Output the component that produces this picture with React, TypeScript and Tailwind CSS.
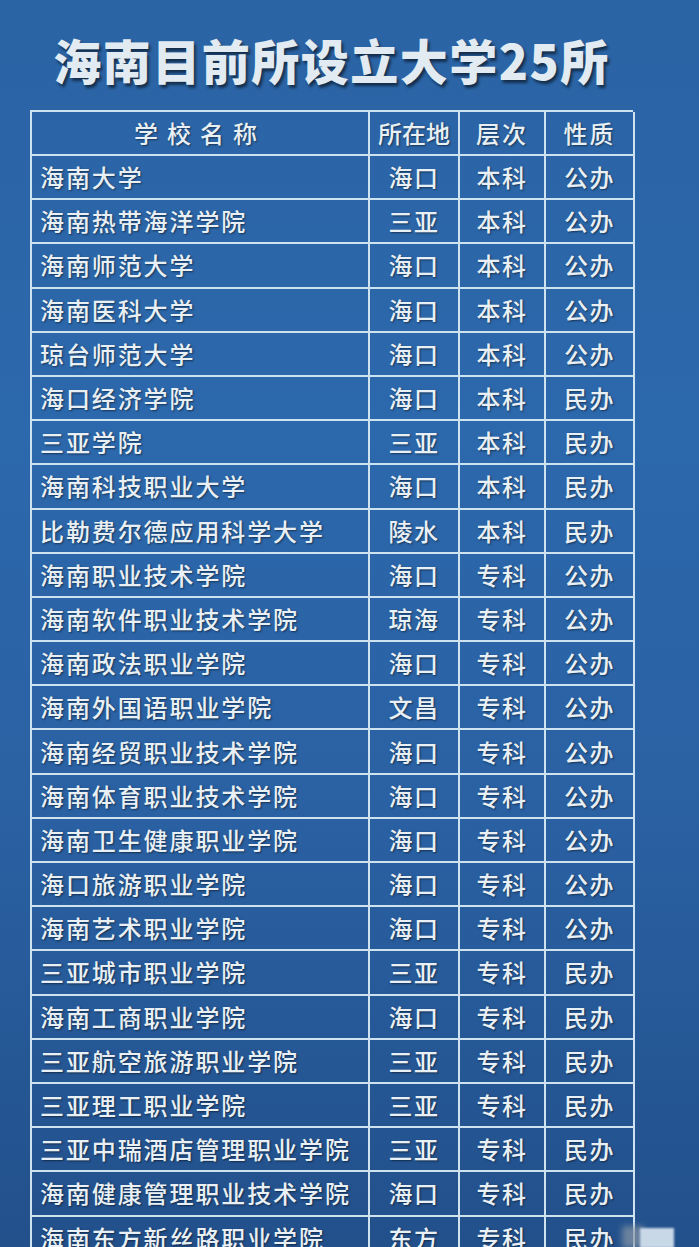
import React from "react";

const rows: [string, string, string, string][] = [
  ["海南大学", "海口", "本科", "公办"],
  ["海南热带海洋学院", "三亚", "本科", "公办"],
  ["海南师范大学", "海口", "本科", "公办"],
  ["海南医科大学", "海口", "本科", "公办"],
  ["琼台师范大学", "海口", "本科", "公办"],
  ["海口经济学院", "海口", "本科", "民办"],
  ["三亚学院", "三亚", "本科", "民办"],
  ["海南科技职业大学", "海口", "本科", "民办"],
  ["比勒费尔德应用科学大学", "陵水", "本科", "民办"],
  ["海南职业技术学院", "海口", "专科", "公办"],
  ["海南软件职业技术学院", "琼海", "专科", "公办"],
  ["海南政法职业学院", "海口", "专科", "公办"],
  ["海南外国语职业学院", "文昌", "专科", "公办"],
  ["海南经贸职业技术学院", "海口", "专科", "公办"],
  ["海南体育职业技术学院", "海口", "专科", "公办"],
  ["海南卫生健康职业学院", "海口", "专科", "公办"],
  ["海口旅游职业学院", "海口", "专科", "公办"],
  ["海南艺术职业学院", "海口", "专科", "公办"],
  ["三亚城市职业学院", "三亚", "专科", "民办"],
  ["海南工商职业学院", "海口", "专科", "民办"],
  ["三亚航空旅游职业学院", "三亚", "专科", "民办"],
  ["三亚理工职业学院", "三亚", "专科", "民办"],
  ["三亚中瑞酒店管理职业学院", "三亚", "专科", "民办"],
  ["海南健康管理职业技术学院", "海口", "专科", "民办"],
  ["海南东方新丝路职业学院", "东方", "专科", "民办"],
];

const cell =
  "border-r-2 border-b-2 border-[#cfe2f0] flex items-center text-[24px] font-medium text-[#e9f0f5] whitespace-nowrap [text-shadow:1px_1px_2px_rgba(0,0,0,0.5)]";

export default function App() {
  return (
    <div
      className="relative w-[699px] h-[1247px] overflow-hidden bg-[linear-gradient(180deg,#2b64a5_0%,#2c68ac_35%,#2a61a3_65%,#22508b_100%)]"
      style={{ fontFamily: '"Noto Sans CJK SC", "Noto Sans", sans-serif' }}
    >
      <div className="w-[603px] ml-[30px] flex flex-col">
        <div className="h-[110px] flex items-center justify-center pt-[8px]">
          <h1 className="text-[48px] font-black tracking-[1.5px] whitespace-nowrap text-[#e3ebf2] leading-none [text-shadow:2px_3px_3px_rgba(0,0,0,0.55)]">
            海南目前所设立大学25所
          </h1>
        </div>
        <div className="border-l-2 border-t-2 border-[#cfe2f0] flex flex-col">
          <div className="grid grid-cols-[338px_90px_86px_89px] h-[44px]">
            <div className={`${cell} justify-center text-[23px] tracking-[9px]`}>学校名称</div>
            <div className={`${cell} justify-center text-[23px]`}>所在地</div>
            <div className={`${cell} justify-center text-[23px] tracking-[2px]`}>层次</div>
            <div className={`${cell} justify-center text-[23px] tracking-[2px]`}>性质</div>
          </div>
          {rows.map((r, i) => (
            <div key={i} className="grid grid-cols-[338px_90px_86px_89px] h-[44.2px]">
              <div className={`${cell} pl-[8px] tracking-[1.9px]`}>{r[0]}</div>
              <div className={`${cell} justify-center tracking-[1.5px]`}>{r[1]}</div>
              <div className={`${cell} justify-center tracking-[1.5px]`}>{r[2]}</div>
              <div className={`${cell} justify-center tracking-[1.5px]`}>{r[3]}</div>
            </div>
          ))}
        </div>
      </div>
      <div className="absolute left-[622px] top-[1226px] w-[22px] h-[22px] bg-[#8a97a6] blur-[3px] opacity-70" />
      <div className="absolute left-[640px] top-[1228px] w-[34px] h-[20px] bg-[#c9d8e6] blur-[1px]" />
    </div>
  );
}
